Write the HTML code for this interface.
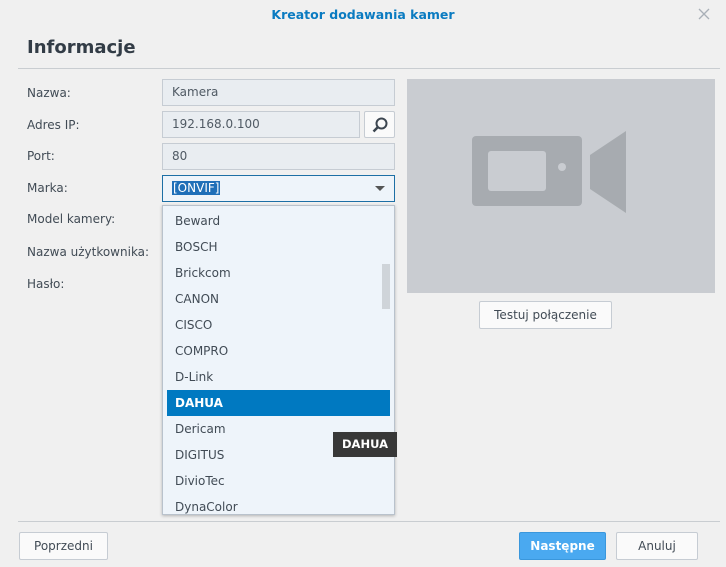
<!DOCTYPE html>
<html><head><style>
*{box-sizing:border-box;margin:0;padding:0}
body{width:726px;height:567px;background:#f0f0f0;font-family:"DejaVu Sans","Liberation Sans",sans-serif;font-size:12px;color:#414b55;position:relative;overflow:hidden}
.a{position:absolute}
.title{left:0;width:726px;top:7px;text-align:center;color:#0a7bc1;font-weight:bold;font-size:12.5px}
.h{left:27px;top:37px;font-size:18px;font-weight:bold;color:#323c46}
.line{height:1px;background:#c9cdd1;left:18px;width:702px}
.lbl{left:27px}
.in{background:#e9edf1;border:1px solid #c6ccd3;height:27px;padding-left:9px;line-height:25px;color:#505a64}
.btn{background:#fafafa;border:1px solid #c6ccd3;text-align:center;line-height:26px;height:28px;border-radius:2px}
.dd{left:162px;top:205px;width:233px;height:310px;background:#eef4fa;border:1px solid #b9c2cc;box-shadow:0 1px 3px rgba(0,0,0,.25);overflow:hidden}
.dd div{height:26px;line-height:26px;padding-left:12px;color:#414b55}
</style></head><body>
<div class="a title">Kreator dodawania kamer</div>
<svg class="a" style="right:16px;top:8px" width="12" height="12"><path d="M1 1L11 11M11 1L1 11" stroke="#a9b0b7" stroke-width="1.3"/></svg>
<div class="a h">Informacje</div>
<div class="a line" style="top:68px"></div>
<div class="a lbl" style="top:86px">Nazwa:</div>
<div class="a lbl" style="top:118px">Adres IP:</div>
<div class="a lbl" style="top:149px">Port:</div>
<div class="a lbl" style="top:181px">Marka:</div>
<div class="a lbl" style="top:212px">Model kamery:</div>
<div class="a lbl" style="top:245px">Nazwa użytkownika:</div>
<div class="a lbl" style="top:277px">Hasło:</div>
<div class="a in" style="left:162px;top:79px;width:233px">Kamera</div>
<div class="a in" style="left:162px;top:111px;width:198px">192.168.0.100</div>
<div class="a btn" style="left:364px;top:111px;width:31px;height:27px"><svg width="18" height="18" viewBox="0 0 18 18" style="margin-top:4px"><circle cx="10.5" cy="7.5" r="5" fill="none" stroke="#3c4650" stroke-width="2"/><path d="M7 11L2.5 15.5" stroke="#3c4650" stroke-width="2.5"/></svg></div>
<div class="a in" style="left:162px;top:143px;width:233px">80</div>
<div class="a in" style="left:162px;top:175px;width:233px;background:#eef4fa;border-color:#1d6fa5"><span style="background:#1f6fb8;color:#fff;padding:0 1px">[ONVIF]</span></div>
<div class="a" style="left:375px;top:186px;width:0;height:0;border-left:5px solid transparent;border-right:5px solid transparent;border-top:5px solid #555"></div>
<div class="a dd">
<div style="margin-top:2px">Beward</div><div>BOSCH</div><div>Brickcom</div><div>CANON</div><div>CISCO</div><div>COMPRO</div><div>D-Link</div>
<div style="background:#0079c1;color:#fff;font-weight:bold;margin:0 4px;padding-left:8px">DAHUA</div>
<div>Dericam</div><div>DIGITUS</div><div>DivioTec</div><div>DynaColor</div>
</div>
<div class="a" style="left:382px;top:264px;width:8px;height:45px;background:#cfd4d9"></div>
<div class="a" style="left:333px;top:432px;width:64px;height:25px;background:#383838;color:#fff;font-weight:bold;text-align:center;line-height:24px;font-size:11.5px">DAHUA</div>
<div class="a" style="left:407px;top:79px;width:308px;height:214px;background:#c9ccd1">
<svg width="308" height="214"><rect x="65" y="57" width="110" height="70" rx="4" fill="#a7abb0"/><rect x="81" y="72" width="58" height="40" rx="3" fill="#c9ccd1"/><circle cx="155" cy="88" r="4" fill="#c9ccd1"/><path d="M183 76L219 52V134L183 110Z" fill="#a7abb0"/></svg>
</div>
<div class="a btn" style="left:479px;top:301px;width:133px;height:28px">Testuj połączenie</div>
<div class="a line" style="top:521px"></div>
<div class="a btn" style="left:19px;top:532px;width:89px">Poprzedni</div>
<div class="a btn" style="left:519px;top:532px;width:87px;background:#4aa9f0;border-color:#3a97dc;color:#fff;font-weight:bold">Następne</div>
<div class="a btn" style="left:616px;top:532px;width:82px">Anuluj</div>
</body></html>
